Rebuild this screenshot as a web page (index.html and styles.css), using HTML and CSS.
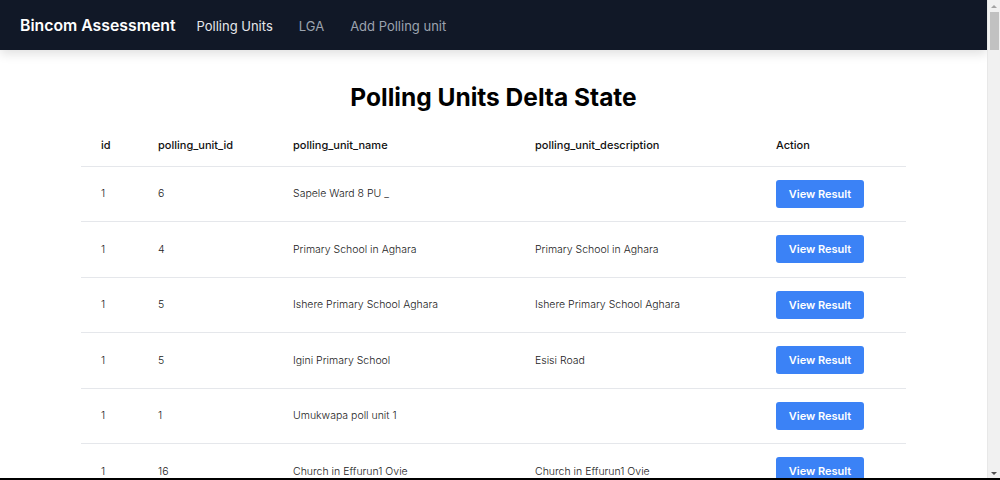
FILE: index.html
```html
<!DOCTYPE html>
<html lang="en">
<head>
<meta charset="utf-8">
<title>Bincom Assessment</title>
<link rel="stylesheet" href="styles.css">
</head>
<body>
<div class="window">
  <div class="page">
    <nav class="navbar">
      <a class="brand" href="#">Bincom Assessment</a>
      <ul class="nav-links">
        <li><a class="nav-link active" href="#">Polling Units</a></li>
        <li><a class="nav-link" href="#">LGA</a></li>
        <li><a class="nav-link" href="#">Add Polling unit</a></li>
      </ul>
    </nav>
    <main class="content">
      <h1 class="title">Polling Units Delta State</h1>
      <table class="units">
        <colgroup>
          <col class="c-id"><col class="c-puid"><col class="c-name"><col class="c-desc"><col class="c-action">
        </colgroup>
        <thead>
          <tr><th>id</th><th>polling_unit_id</th><th>polling_unit_name</th><th>polling_unit_description</th><th>Action</th></tr>
        </thead>
        <tbody>
          <tr><td>1</td><td>6</td><td>Sapele Ward 8 PU _</td><td></td><td><button class="btn">View Result</button></td></tr>
          <tr><td>1</td><td>4</td><td>Primary School in Aghara</td><td>Primary School in Aghara</td><td><button class="btn">View Result</button></td></tr>
          <tr><td>1</td><td>5</td><td>Ishere Primary School Aghara</td><td>Ishere Primary School Aghara</td><td><button class="btn">View Result</button></td></tr>
          <tr><td>1</td><td>5</td><td>Igini Primary School</td><td>Esisi Road</td><td><button class="btn">View Result</button></td></tr>
          <tr><td>1</td><td>1</td><td>Umukwapa poll unit 1</td><td></td><td><button class="btn">View Result</button></td></tr>
          <tr><td>1</td><td>16</td><td>Church in Effurun1 Ovie</td><td>Church in Effurun1 Ovie</td><td><button class="btn">View Result</button></td></tr>
        </tbody>
      </table>
    </main>
  </div>
  <div class="scrollbar" aria-hidden="true">
    <span class="arrow up"></span>
    <span class="thumb"></span>
    <span class="track-fill"></span>
    <span class="arrow down"></span>
  </div>
</div>
</body>
</html>
```

FILE: styles.css
```css
* { box-sizing: border-box; }
html, body { margin: 0; padding: 0; }
body {
  font-family: Inter, "Noto Sans", sans-serif;
  color: #111827;
  background: #ffffff;
  overflow: hidden;
}
.window {
  display: flex;
  height: 480px;
  border-bottom: 2px solid #000;
}
.page {
  flex: 1;
  min-width: 0;
  overflow: hidden;
}
.scrollbar {
  width: 13px;
  flex: none;
  background: #f1f1f1;
  border-left: 1px solid #e8e8e8;
  display: flex;
  flex-direction: column;
  align-items: center;
  padding: 4px 0 3px;
}
.arrow {
  width: 0;
  height: 0;
  border-left: 3px solid transparent;
  border-right: 3px solid transparent;
  flex: none;
}
.arrow.up { border-bottom: 3px solid #a3a3a3; margin-top: 1px; }
.arrow.down { border-top: 3px solid #505050; }
.thumb {
  width: 9px;
  height: 38px;
  background: #c1c1c1;
  margin-top: 4px;
  flex: none;
}
.track-fill { flex: 1; }
.navbar {
  height: 50px;
  background: #111827;
  display: flex;
  align-items: center;
  padding: 0 20px;
  box-shadow: 0 4px 10px rgba(0,0,0,0.12);
  position: relative;
}
.brand {
  color: #ffffff;
  font-size: 15.8px;
  font-weight: 600;
  text-decoration: none;
  margin-right: 21px;
}
.nav-links {
  list-style: none;
  margin: 0;
  padding: 0;
  display: flex;
  gap: 26px;
}
.nav-link {
  color: #9ca3af;
  font-size: 13px;
  text-decoration: none;
}
.nav-link.active { color: #e5e7eb; }
.content {
  padding-top: 32px;
}
.title {
  margin: 0 0 13px;
  text-align: center;
  font-size: 24.5px;
  font-weight: 700;
  color: #000;
  line-height: 30px;
}
.units {
  width: 825px;
  margin: 0 auto;
  border-collapse: collapse;
  font-size: 11px;
}
.c-id { width: 57px; }
.c-puid { width: 135px; }
.c-name { width: 242px; }
.c-desc { width: 241px; }
.c-action { width: 150px; }
.units th {
  text-align: left;
  font-weight: 500;
  color: #111;
  padding: 0 0 0 20px;
  height: 41px;
  border-bottom: 1px solid #e5e7eb;
}
.units td {
  padding: 0 0 0 20px;
  height: 55.5px;
  border-bottom: 1px solid #e5e7eb;
  color: #222;
  font-size: 10.5px;
  font-weight: 300;
}
.btn {
  background: #3b82f6;
  color: #fff;
  border: none;
  border-radius: 3px;
  width: 88px;
  height: 28px;
  font-family: inherit;
  font-size: 11px;
  font-weight: 600;
  padding: 0;
}
```
